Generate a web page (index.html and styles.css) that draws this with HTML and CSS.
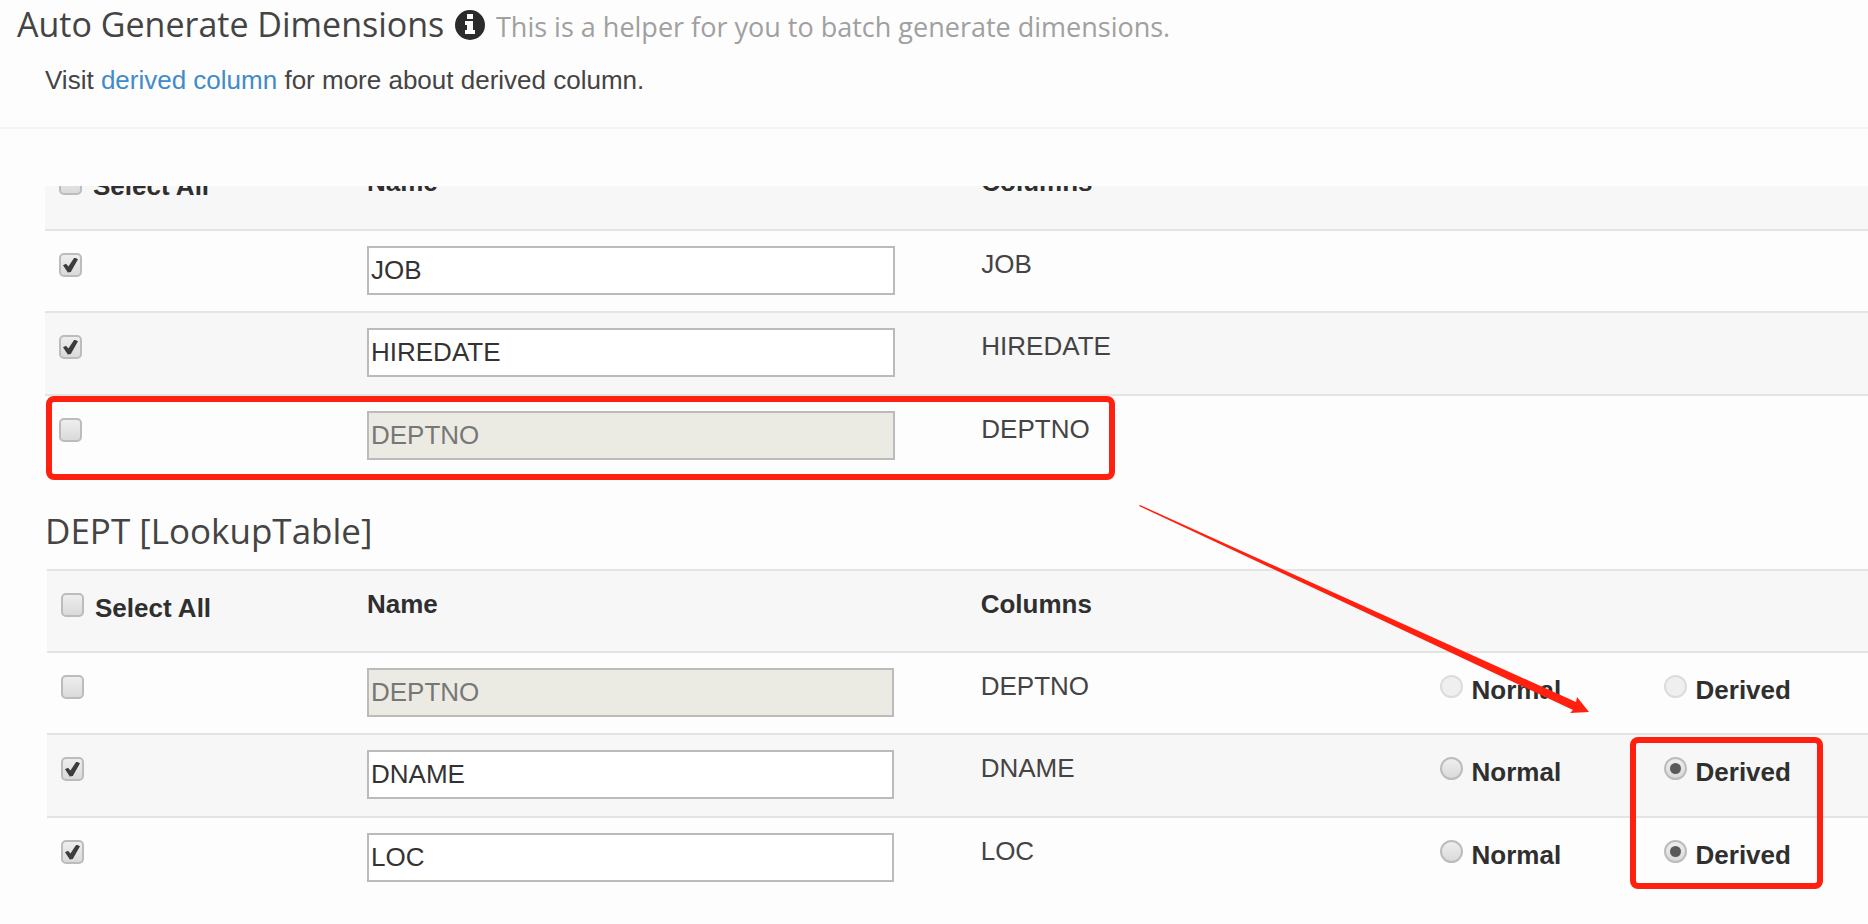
FILE: index.html
```html
<!DOCTYPE html>
<html lang="en">
<head>
<meta charset="utf-8">
<title>Auto Generate Dimensions</title>
<link rel="stylesheet" href="styles.css">
</head>
<body>
<main class="dialog">
  <header class="dialog-header">
    <h1 class="title">Auto Generate Dimensions
      <svg class="info-icon" viewBox="0 0 30 30" aria-hidden="true"><circle cx="15" cy="15" r="15" fill="#2b2b2b"/><path fill="#fdfdfd" d="M12 4h6v5h-6zM10 11h8v9h2v4H10v-4h2v-5h-2z"/></svg>
      <small class="subtitle">This is a helper for you to batch generate dimensions.</small>
    </h1>
    <p class="hint">Visit <a href="#">derived column</a> for more about derived column.</p>
  </header>

  <div class="scroll-area">
    <table class="dims dims-fact">
      <colgroup><col class="c-pick"><col class="c-name"><col class="c-column"><col class="c-normal"><col class="c-derived"></colgroup>
      <thead>
        <tr><th><label class="choice choice-all"><input class="check" type="checkbox"><span>Select All</span></label></th><th>Name</th><th>Columns</th><th></th><th></th></tr>
      </thead>
      <tbody>
        <tr><td><input class="check" type="checkbox" aria-label="JOB" checked></td><td><input class="field" type="text" aria-label="Name" value="JOB"></td><td>JOB</td><td></td><td></td></tr>
        <tr><td><input class="check" type="checkbox" aria-label="HIREDATE" checked></td><td><input class="field" type="text" aria-label="Name" value="HIREDATE"></td><td>HIREDATE</td><td></td><td></td></tr>
        <tr><td><input class="check" type="checkbox" aria-label="DEPTNO"></td><td><input class="field" type="text" aria-label="Name" value="DEPTNO" disabled></td><td>DEPTNO</td><td></td><td></td></tr>
      </tbody>
    </table>

    <h2 class="table-title">DEPT [LookupTable]</h2>

    <table class="dims dims-lookup">
      <colgroup><col class="c-pick"><col class="c-name"><col class="c-column"><col class="c-normal"><col class="c-derived"></colgroup>
      <thead>
        <tr><th><label class="choice choice-all"><input class="check" type="checkbox"><span>Select All</span></label></th><th>Name</th><th>Columns</th><th></th><th></th></tr>
      </thead>
      <tbody>
        <tr><td><input class="check" type="checkbox" aria-label="DEPTNO"></td><td><input class="field" type="text" aria-label="Name" value="DEPTNO" disabled></td><td>DEPTNO</td>
          <td><label class="choice"><input class="radio" type="radio" name="deptno" disabled><span>Normal</span></label></td>
          <td><label class="choice"><input class="radio" type="radio" name="deptno" disabled><span>Derived</span></label></td></tr>
        <tr><td><input class="check" type="checkbox" aria-label="DNAME" checked></td><td><input class="field" type="text" aria-label="Name" value="DNAME"></td><td>DNAME</td>
          <td><label class="choice"><input class="radio" type="radio" name="dname"><span>Normal</span></label></td>
          <td><label class="choice"><input class="radio" type="radio" name="dname" checked><span>Derived</span></label></td></tr>
        <tr><td><input class="check" type="checkbox" aria-label="LOC" checked></td><td><input class="field" type="text" aria-label="Name" value="LOC"></td><td>LOC</td>
          <td><label class="choice"><input class="radio" type="radio" name="loc"><span>Normal</span></label></td>
          <td><label class="choice"><input class="radio" type="radio" name="loc" checked><span>Derived</span></label></td></tr>
      </tbody>
    </table>
  </div>

  <div class="mark mark-row"></div>
  <div class="mark mark-derived"></div>
  <svg class="arrow" viewBox="0 0 450 208" aria-hidden="true"><path fill="#ff2010" d="M0 0L1 -1L437 196L438 191L450 206L431 207L434 204Z"/></svg>
</main>
</body>
</html>
```

FILE: styles.css
```css
* { box-sizing: border-box; }

body {
  margin: 0;
  background: #fdfdfd;
  color: #444;
  font: 26px/37px "Liberation Sans", Arial, sans-serif;
}

.dialog { position: relative; overflow: hidden; }

.dialog-header {
  padding: 1px 17px 28px;
  border-bottom: 2px solid #f3f3f3;
}

.title, .table-title {
  margin: 0;
  font: 400 35px/46px "Open Sans", "Noto Sans", sans-serif;
  color: #444;
}
.title { font-size: 34px; }

.info-icon { width: 30px; height: 30px; margin: 0 2px; vertical-align: -3px; }

.subtitle { font-size: 27px; line-height: 30px; color: #a0a0a0; }

.hint { margin: 15px 0 0; padding-left: 28px; }
.hint a { color: #428bca; text-decoration: none; }

.scroll-area {
  margin-top: 57px;
  padding-left: 45px;
  overflow: hidden;
}

.dims {
  width: 100%;
  table-layout: fixed;
  border-collapse: separate;
  border-spacing: 0;
}
.dims-fact { margin-top: -39px; }
.dims-lookup { width: calc(100% - 2px); margin-left: 2px; }

.c-pick { width: 308px; }
.dims-lookup .c-pick { width: 306px; }
.c-name { width: 33.7%; }
.c-column { width: 25.2%; }
.c-normal { width: 12.3%; }

.dims tr { height: 82px; }
.dims tbody tr:nth-child(even) { height: 83px; }
.dims th, .dims td {
  padding: 15px 14px 14px;
  border-top: 2px solid #e3e4e3;
  text-align: left;
  vertical-align: top;
}
.dims thead tr, .dims tbody tr:nth-child(even) { background: #f7f7f7; }
.dims th { color: #2f2f2f; }

.table-title { margin: 32px 0 15px; }

.choice {
  display: flex;
  align-items: flex-start;
  gap: 9px;
  color: #2f2f2f;
  font-weight: 700;
}
.choice-all { gap: 11px; }
.choice span { padding-top: 4px; }

.check, .radio {
  appearance: none;
  display: grid;
  place-items: center;
  flex: none;
  width: 23px;
  height: 24px;
  margin: 7px 0 0;
  border: 2px solid #bcbcbc;
  background: linear-gradient(#eee, #dadada);
}
.check { border-radius: 5px; }
.radio { height: 23px; border-radius: 50%; }
.radio:disabled { border-color: #dcdcdc; background: #efefef; }

.check:checked::before {
  content: "";
  width: 15px;
  height: 15px;
  background: #3c3c3c;
  clip-path: polygon(0 52%, 20% 42%, 36% 60%, 76% 0, 100% 12%, 52% 96%, 32% 100%);
}
.radio:checked::before {
  content: "";
  width: 11px;
  height: 11px;
  border-radius: 50%;
  background: #5a5a5a;
}

.field {
  display: block;
  width: 90%;
  height: 49px;
  padding: 2px;
  border: 2px solid #bbb;
  border-radius: 0;
  background: #fff;
  color: #333;
  font: inherit;
}
.field:disabled { background: #ebebe4; color: #777; }

.mark {
  position: absolute;
  border: 6px solid #ff2010;
  border-radius: 8px;
  pointer-events: none;
}
.mark-row { top: 396px; left: 46px; width: 1069px; height: 84px; }
.mark-derived { top: 737px; right: 45px; width: 193px; height: 152px; }

.arrow {
  position: absolute;
  top: 506px;
  left: 1139px;
  width: 450px;
  height: 208px;
  overflow: visible;
  pointer-events: none;
}
```
